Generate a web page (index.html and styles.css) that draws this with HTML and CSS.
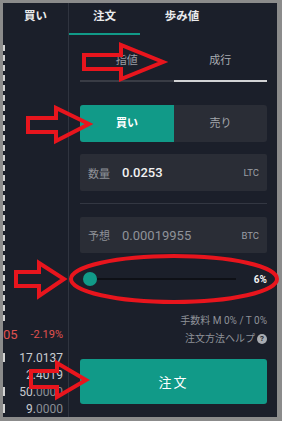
FILE: index.html
```html
<html lang="ja">
  <head>
    <meta charset="UTF-8" />
    <meta name="viewport" content="width=device-width, initial-scale=1.0" />
    <title>注文</title>
    <link rel="stylesheet" href="styles.css">
  </head>
  <body>
    <div class="frame">
      <aside class="book">
        <div class="book-head">買い</div>
        <div class="book-ticks"></div>
        <div class="book-rows">
          <div class="book-row first">
            <span class="cut red">05</span>
            <span class="pct-change">-2.19%</span>
          </div>
          <div class="book-row"><span class="tick"></span><span class="qty">17.0137</span></div>
          <div class="book-row"><span class="tick off"></span><span class="qty">2.4019</span></div>
          <div class="book-row"><span class="tick"></span><span class="qty">50.<em>0000</em></span></div>
          <div class="book-row"><span class="tick"></span><span class="qty">9.<em>0000</em></span></div>
        </div>
      </aside>

      <main class="order">
        <nav class="tabs">
          <div class="tab active">注文</div>
          <div class="tab wide">歩み値</div>
        </nav>

        <div class="types">
          <div class="type">指値</div>
          <div class="type active">成行</div>
        </div>

        <div class="side">
          <div class="buy">買い</div>
          <div class="sell">売り</div>
        </div>

        <div class="field">
          <span class="label">数量</span>
          <span class="value">0.0253</span>
          <span class="unit">LTC</span>
        </div>

        <div class="sep"></div>

        <div class="field predict">
          <span class="label">予想</span>
          <span class="value dim">0.00019955</span>
          <span class="unit">BTC</span>
        </div>

        <div class="slider">
          <span class="knob"></span>
          <span class="track"></span>
          <span class="percent">6%</span>
        </div>

        <p class="fee">手数料 M 0% / T 0%</p>
        <p class="help">注文方法ヘルプ <span class="q">?</span></p>

        <button class="submit">注文</button>
      </main>
    </div>

    <!-- red annotation marks drawn over the screen -->
    <svg class="marks" width="282" height="421" viewBox="0 0 282 421">
      <polygon points="84,55 121,55 121,45 163,62 121,79 121,69 84,69" />
      <polygon points="28,118 56,118 56,108 89,124 56,141 56,132 28,132" />
      <polygon points="16,272 39,272 39,263 64,279 39,296 39,286 16,286" />
      <polygon points="31,371 57,371 57,363 86,380 57,397 57,387 31,387" />
      <ellipse cx="174" cy="279" rx="103" ry="23" />
    </svg>
  </body>
</html>
```

FILE: styles.css
```css
*,
*::after,
*::before {
  margin: 0;
  padding: 0;
  box-sizing: border-box;
}

:root {
  --bg: #1b1f2a;
  --panel: #2a2d36;
  --line: #30343f;
  --teal: #119a88;
  --text: #e9eaec;
  --muted: #8e9198;
  --red: #e0524f;
  --mark: #e8151d;
}

body {
  position: relative;
  width: 282px;
  height: 421px;
  overflow: hidden;
  background: #8b8b8b;
  font-family: Roboto, "Noto Sans CJK JP", sans-serif;
}

.frame {
  display: flex;
  margin: 3px 0 0 3px;
  width: 274px;
  height: 414px;
  overflow: hidden;
  background: var(--bg);
}

/* left order book strip */
.book {
  width: 66px;
  border-right: 1px solid var(--line);
  display: flex;
  flex-direction: column;
}

.book-head {
  height: 32px;
  padding-top: 5px;
  line-height: 16px;
  text-align: center;
  font-size: 11.5px;
  font-weight: 700;
  color: var(--text);
}

.book-ticks {
  width: 2px;
  height: 280px;
  margin-top: 10px;
  background: repeating-linear-gradient(to bottom, #d4d4d4 0 6px, transparent 6px 10px);
}

.book-rows {
  margin-top: 1px;
}

.book-row {
  display: flex;
  justify-content: space-between;
  align-items: center;
  height: 17px;
  padding-right: 5px;
  font-size: 12px;
  color: #c8cbd0;
}

.book-row.first {
  height: 20px;
  margin-bottom: 5px;
}

.cut.red {
  font-size: 13px;
  color: var(--red);
}

.tick {
  width: 2px;
  height: 9px;
  background: #d4d4d4;
}

.tick.off {
  background: transparent;
}

.pct-change {
  font-size: 11px;
  color: var(--red);
}

.qty em {
  font-style: normal;
  color: #8a8e95;
}

/* order panel */
.order {
  flex: 1;
  display: flex;
  flex-direction: column;
  padding: 0 10px 0 11px;
}

.tabs {
  display: flex;
  height: 32px;
  margin: 0 -10px 0 -11px;
}

.tab {
  width: 71px;
  height: 32px;
  padding-top: 5px;
  line-height: 16px;
  text-align: center;
  font-size: 11.5px;
  font-weight: 700;
  color: var(--text);
}

.tab.wide {
  width: 84px;
}

.tab.active {
  border-bottom: 2px solid var(--teal);
}

.types {
  display: flex;
  margin-top: 10px;
}

.type {
  flex: 1;
  height: 37px;
  line-height: 31px;
  text-align: center;
  font-size: 11px;
  color: #9a9da4;
  border-bottom: 2px solid #393c45;
}

.type.active {
  color: #a9acb1;
  border-bottom-color: #d2d3d5;
}

.side {
  display: flex;
  height: 37px;
  margin-top: 23px;
  border-radius: 3px;
  overflow: hidden;
  background: var(--panel);
}

.buy,
.sell {
  line-height: 37px;
  text-align: center;
  font-size: 11px;
}

.buy {
  width: 94px;
  background: var(--teal);
  color: #fff;
  font-weight: 700;
}

.sell {
  flex: 1;
  color: #a3a6ac;
}

.field {
  display: flex;
  align-items: center;
  height: 37px;
  margin-top: 12px;
  padding: 0 8px;
  border-radius: 2px;
  background: var(--panel);
}

.field.predict {
  height: 36px;
  margin-top: 13px;
}

.label {
  width: 34px;
  font-size: 11px;
  color: var(--muted);
}

.value {
  flex: 1;
  font-size: 13px;
  font-weight: 500;
  color: #f2f2f2;
}

.value.dim {
  font-weight: 400;
  color: #8f9299;
}

.unit {
  font-size: 9.5px;
  color: #9a9da4;
}

.sep {
  height: 1px;
  margin-top: 12px;
  background: #333742;
}

.slider {
  display: flex;
  align-items: center;
  height: 16px;
  margin-top: 18px;
}

.knob {
  width: 14px;
  height: 14px;
  margin-left: 3px;
  border-radius: 50%;
  background: var(--teal);
}

.track {
  width: 139px;
  height: 2px;
  background: #0e1016;
}

.percent {
  margin-left: auto;
  font-size: 10px;
  font-weight: 700;
  color: #f2f2f2;
}

.fee,
.help {
  font-size: 10px;
  line-height: 14px;
  text-align: right;
  color: var(--muted);
}

.fee {
  margin-top: 27px;
}

.help {
  display: flex;
  justify-content: flex-end;
  align-items: center;
  gap: 2px;
  margin-top: 4px;
}

.q {
  width: 10px;
  height: 10px;
  border-radius: 50%;
  background: #a9acb2;
  color: var(--bg);
  font-size: 8px;
  font-weight: 700;
  line-height: 10px;
  text-align: center;
}

.submit {
  height: 45px;
  margin-top: 13px;
  border: 0;
  border-radius: 3px;
  background: var(--teal);
  color: #fff;
  font-family: inherit;
  font-size: 13px;
  letter-spacing: 2px;
}

.marks {
  position: absolute;
  top: 0;
  left: 0;
  pointer-events: none;
  fill: none;
  stroke: var(--mark);
  stroke-width: 4;
}
```
